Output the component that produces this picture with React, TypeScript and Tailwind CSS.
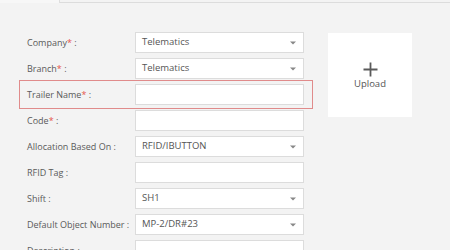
const rows = [
  { label: "Company", required: true, value: "Telematics", select: true },
  { label: "Branch", required: true, value: "Telematics", select: true },
  { label: "Trailer Name", required: true, value: "", select: false, focus: true },
  { label: "Code", required: true, value: "", select: false },
  { label: "Allocation Based On", required: false, value: "RFID/IBUTTON", select: true },
  { label: "RFID Tag", required: false, value: "", select: false },
  { label: "Shift", required: false, value: "SH1", select: true },
  { label: "Default Object Number", required: false, value: "MP-2/DR#23", select: true },
  { label: "Description", required: false, value: "", select: false },
];

function Caret() {
  return (
    <svg width="6" height="4" viewBox="0 0 6 4" className="shrink-0">
      <path d="M0 0.5 L6 0.5 L3 3.5 Z" fill="#888" />
    </svg>
  );
}

export default function App() {
  return (
    <div className="relative h-[250px] w-[450px] overflow-hidden bg-[#f3f3f3] font-['Open_Sans',sans-serif] text-[#555]">
      <div className="flex h-[3px]">
        <div className="w-[60px] border-r border-[#dedede] bg-[#f7f7f7]" />
        <div className="flex-1 border-b border-[#dcdcdc]" />
      </div>

      <div className="flex pl-[27px] pt-[29px]">
        <div className="flex flex-col gap-[5px]">
          {rows.map((row) => {
            const line = (
              <div className="flex h-[21px] items-center">
                <div className="w-[108px] text-[9px] leading-none text-[#5a5a5a]">
                  {row.label}
                  {row.required && <span className="text-[#e5534b]">*</span>}
                  {" :"}
                </div>
                <div className="flex h-[21px] w-[169px] items-center justify-between border border-[#dcdcdc] bg-white pl-[6px] pr-[7px] text-[9.5px] text-[#555]">
                  <span>{row.value}</span>
                  {row.select && <Caret />}
                </div>
              </div>
            );
            if (row.focus) {
              return (
                <div
                  key={row.label}
                  className="-mx-[8px] -my-[4px] border border-[#e08b8b] py-[3px] pl-[7px] pr-[8px]"
                >
                  {line}
                </div>
              );
            }
            return <div key={row.label}>{line}</div>;
          })}
        </div>

        <div className="ml-[23px] mt-[1px] flex h-[84px] w-[84px] flex-col items-center justify-center bg-white">
          <svg width="15" height="15" viewBox="0 0 15 15">
            <path d="M7.5 0.5 V14.5 M0.5 7.5 H14.5" stroke="#5a5a5a" strokeWidth="1.8" />
          </svg>
          <span className="mt-[2px] text-[9.5px] leading-none text-[#555]">Upload</span>
        </div>
      </div>
    </div>
  );
}
